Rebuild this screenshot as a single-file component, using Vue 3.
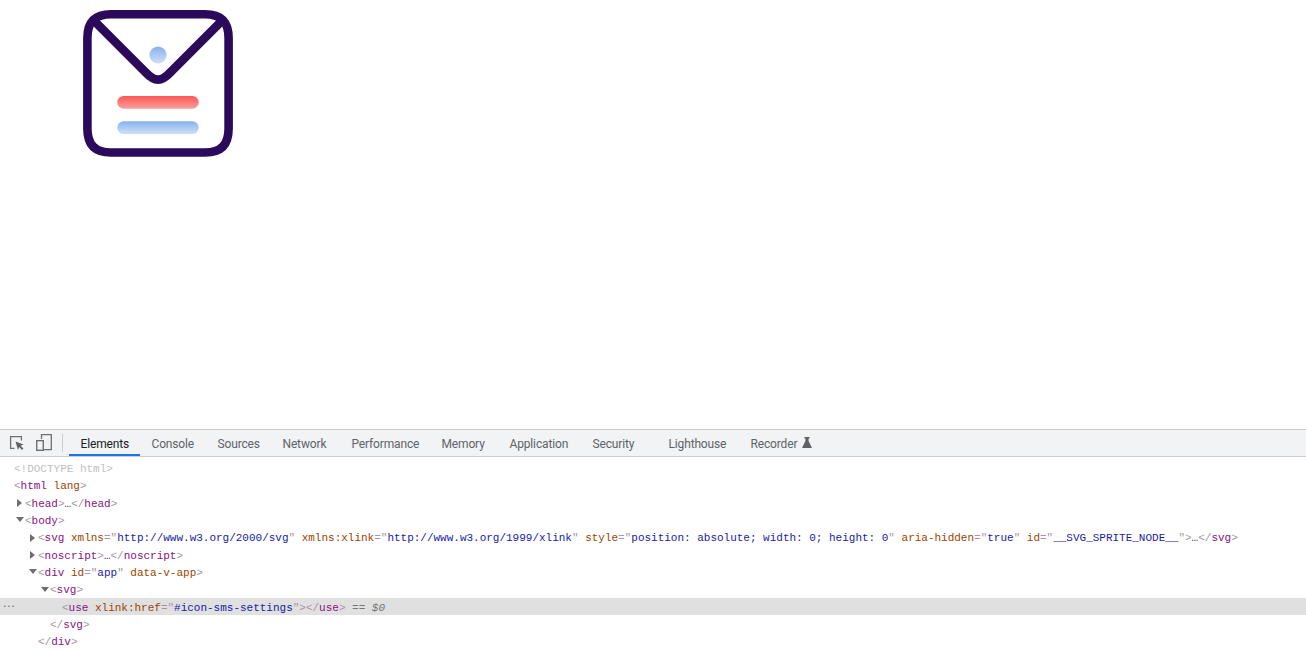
<script setup>
// widths are read off the reference tab strip, Recorder just takes its content
const tabs = [
  { label: "Elements", width: 71, active: true },
  { label: "Console", width: 66 },
  { label: "Sources", width: 65 },
  { label: "Network", width: 69 },
  { label: "Performance", width: 90 },
  { label: "Memory", width: 68 },
  { label: "Application", width: 83 },
  { label: "Security", width: 76 },
  { label: "Lighthouse", width: 82 },
  { label: "Recorder", flask: true },
];

// b = bracket, t = tag, n = attr name, e = equals/plain, v = attr value, d = doctype, s = $0 hint
const rows = [
  { indent: 0, parts: [["d", "<!DOCTYPE html>"]] },
  { indent: 0, parts: [["b", "<"], ["t", "html"], ["e", " "], ["n", "lang"], ["b", ">"]] },
  { indent: 1, arrow: "right", parts: [["b", "<"], ["t", "head"], ["b", ">"], ["e", "…"], ["b", "</"], ["t", "head"], ["b", ">"]] },
  { indent: 1, arrow: "down", parts: [["b", "<"], ["t", "body"], ["b", ">"]] },
  {
    indent: 2,
    arrow: "right",
    parts: [
      ["b", "<"], ["t", "svg"], ["e", " "],
      ["n", "xmlns"], ["b", "=\""], ["v", "http://www.w3.org/2000/svg"], ["b", "\""], ["e", " "],
      ["n", "xmlns:xlink"], ["b", "=\""], ["v", "http://www.w3.org/1999/xlink"], ["b", "\""], ["e", " "],
      ["n", "style"], ["b", "=\""], ["v", "position: absolute; width: 0; height: 0"], ["b", "\""], ["e", " "],
      ["n", "aria-hidden"], ["b", "=\""], ["v", "true"], ["b", "\""], ["e", " "],
      ["n", "id"], ["b", "=\""], ["v", "__SVG_SPRITE_NODE__"], ["b", "\">"], ["e", "…"], ["b", "</"], ["t", "svg"], ["b", ">"],
    ],
  },
  { indent: 2, arrow: "right", parts: [["b", "<"], ["t", "noscript"], ["b", ">"], ["e", "…"], ["b", "</"], ["t", "noscript"], ["b", ">"]] },
  {
    indent: 2,
    arrow: "down",
    parts: [["b", "<"], ["t", "div"], ["e", " "], ["n", "id"], ["b", "=\""], ["v", "app"], ["b", "\""], ["e", " "], ["n", "data-v-app"], ["b", ">"]],
  },
  { indent: 3, arrow: "down", parts: [["b", "<"], ["t", "svg"], ["b", ">"]] },
  {
    indent: 4,
    selected: true,
    parts: [
      ["b", "<"], ["t", "use"], ["e", " "], ["n", "xlink:href"], ["b", "=\""], ["v", "#icon-sms-settings"], ["b", "\">"],
      ["b", "</"], ["t", "use"], ["b", ">"], ["s", " == $0"],
    ],
  },
  { indent: 3, parts: [["b", "</"], ["t", "svg"], ["b", ">"]] },
  { indent: 2, parts: [["b", "</"], ["t", "div"], ["b", ">"]] },
];
</script>

<template>
  <div class="screen">
    <div class="page">
      <svg class="logo" width="150" height="150" viewBox="0 0 150 150" fill="none">
        <defs>
          <linearGradient id="blue" x1="0" y1="0" x2="0" y2="1">
            <stop offset="0" stop-color="#86b1ed" />
            <stop offset="1" stop-color="#cfe0f8" />
          </linearGradient>
          <linearGradient id="red" x1="0" y1="0" x2="0" y2="1">
            <stop offset="0" stop-color="#ff5656" />
            <stop offset="1" stop-color="#fb9f9f" />
          </linearGradient>
        </defs>
        <path
          d="M28 6.2H122C138 6.2 145.6 14 145.6 30V120.5C145.6 136.5 138 144.5 122 144.5H28C12 144.5 4.4 136.5 4.4 120.5V30C4.4 14 12 6.2 28 6.2Z"
          stroke="#2b0a5c"
          stroke-width="8.6"
        />
        <path d="M10.3 12L62 63.7C72 74.3 78 74.3 88 63.7L139.7 12" stroke="#2b0a5c" stroke-width="8.8" />
        <circle cx="75" cy="47" r="8.6" fill="url(#blue)" />
        <rect x="34.3" y="88" width="81.4" height="12.7" rx="6.3" fill="url(#red)" />
        <rect x="34.3" y="113.3" width="81.4" height="12.7" rx="6.3" fill="url(#blue)" />
      </svg>
    </div>

    <div class="devtools">
      <div class="toolbar">
        <div class="tool-icons">
          <svg width="16" height="16" viewBox="0 0 16 16" fill="none">
            <path d="M5.5 13.4H1.6V1.6H12.4V5.5" stroke="#6e7175" stroke-width="1.3" />
            <path d="M6.5 6.5L14.6 9.4L11.6 10.7L14.4 13.5L13 15L10.2 12.1L9 15Z" fill="#5f6368" />
          </svg>
          <svg width="16" height="18" viewBox="0 0 16 18" fill="none">
            <path d="M5.5 5V0.7H15.3V15.7H8" stroke="#6e7175" stroke-width="1.3" />
            <rect x="0.7" y="6.7" width="6.6" height="9.6" stroke="#6e7175" stroke-width="1.4" />
          </svg>
        </div>
        <div class="divider"></div>
        <div class="tabs">
          <div
            v-for="tab in tabs"
            :key="tab.label"
            class="tab"
            :class="{ active: tab.active }"
            :style="tab.width ? { width: tab.width + 'px' } : null"
          >
            <span>{{ tab.label }}</span>
            <svg v-if="tab.flask" class="flask" width="10" height="11" viewBox="0 0 10 11">
              <path d="M2.5 0H7.5V1.6H6.6V4L10 11H0L3.4 4V1.6H2.5Z" fill="#5f6368" />
            </svg>
          </div>
        </div>
      </div>

      <div class="tree">
        <div v-for="(row, i) in rows" :key="i" class="row" :class="{ selected: row.selected }">
          <span v-if="row.selected" class="dots">•••</span>
          <div class="line" :class="`indent-${row.indent}`">
            <span v-if="row.arrow" class="arrow" :class="row.arrow"></span>
            <span v-for="(p, j) in row.parts" :key="j" :class="p[0]">{{ p[1] }}</span>
          </div>
        </div>
      </div>
    </div>
  </div>
</template>

<style scoped>
.screen {
  width: 1306px;
  height: 653px;
  overflow: hidden;
  background: #fff;
}

.page {
  height: 429px;
  padding: 8px 0 0 83px;
  box-sizing: border-box;
}

.logo {
  display: block;
}

.devtools {
  height: 224px;
  overflow: hidden;
}

.toolbar {
  display: flex;
  align-items: center;
  height: 28px;
  box-sizing: border-box;
  background: #f1f3f4;
  border-top: 1px solid #cbcdd1;
  border-bottom: 1px solid #cbcdd1;
  font-family: Roboto, sans-serif;
  font-size: 12px;
  letter-spacing: -0.15px;
  color: #5f6368;
}

.tool-icons {
  display: flex;
  align-items: center;
  gap: 11px;
  padding-left: 9px;
}

.divider {
  width: 1px;
  height: 18px;
  margin-left: 10px;
  background: #cbcdd1;
}

.tabs {
  display: flex;
  align-items: stretch;
  height: 100%;
  margin-left: 6px;
}

.tab {
  display: flex;
  align-items: center;
  gap: 5px;
  box-sizing: border-box;
  padding: 2px 0 0 11.5px;
  white-space: nowrap;
}

.tab.active {
  color: #202124;
  box-shadow: inset 0 -2px 0 #1a73e8;
}

.flask {
  margin-bottom: 3px;
}

.tree {
  padding-top: 2.5px;
  font-family: "Liberation Mono", monospace;
  font-size: 11px;
  letter-spacing: -0.01px;
  color: #222;
}

.row {
  position: relative;
  height: 17.3px;
  line-height: 19.6px;
  white-space: pre;
}

.row.selected {
  background: #e0e0e0;
}

.dots {
  position: absolute;
  left: 3px;
  top: -1px;
  font-size: 6px;
  letter-spacing: 0.5px;
  color: #777;
}

.line {
  position: relative;
  padding-top: 0.65px;
}

.indent-0 { padding-left: 14px; }
.indent-1 { padding-left: 25px; }
.indent-2 { padding-left: 38px; }
.indent-3 { padding-left: 50px; }
.indent-4 { padding-left: 62px; }

.arrow {
  position: absolute;
  width: 0;
  height: 0;
  margin-left: -8px;
  top: 5px;
}

.arrow.right {
  border-top: 4px solid transparent;
  border-bottom: 4px solid transparent;
  border-left: 5px solid #6e6e6e;
}

.arrow.down {
  margin-left: -9.5px;
  top: 6px;
  border-left: 4px solid transparent;
  border-right: 4px solid transparent;
  border-top: 5px solid #6e6e6e;
}

.d { color: #c0c0c0; }
.b { color: #a894a6; }
.t { color: #881280; }
.n { color: #994500; }
.v { color: #1a1aa6; }
.e { color: #303942; }
.s { color: #777; font-style: italic; }
</style>

<style>
html, body {
  margin: 0;
  background: #fff;
}
</style>
